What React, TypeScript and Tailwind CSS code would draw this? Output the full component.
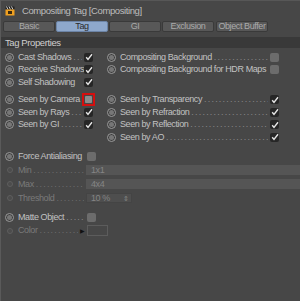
import React from "react";

type Row = { label: string; checked?: boolean; dim?: boolean; dots?: boolean; mark?: boolean };

function Radio({ dim }: { dim?: boolean }) {
  if (dim) {
    return (
      <span className="flex h-[9px] w-[9px] shrink-0 items-center justify-center">
        <span className="block h-[6px] w-[6px] rounded-full border border-[#5e5e5e] bg-[#4c4c4c]" />
      </span>
    );
  }
  return (
    <span className="flex h-[9px] w-[9px] shrink-0 items-center justify-center rounded-full border border-[#9a9a9a] bg-[#3e3e3e]">
      <span className="block h-[5px] w-[5px] rounded-full bg-[#777]" />
    </span>
  );
}

function Check({ checked, mark }: { checked?: boolean; mark?: boolean }) {
  if (checked) {
    return (
      <span className="flex h-[9px] w-[9px] shrink-0 items-center justify-center rounded-[2px] bg-[#262626]">
        <svg width="8" height="8" viewBox="0 0 8 8">
          <path d="M1.2 4.2 L3 6.4 L7 1.2" stroke="#e6e6e6" strokeWidth="1.4" fill="none" />
        </svg>
      </span>
    );
  }
  if (mark) {
    return (
      <span className="-mx-[2px] flex h-[13px] w-[13px] shrink-0 items-center justify-center border-2 border-[#d40f0f]">
        <span className="block h-[7px] w-[7px] rounded-[1px] bg-[#8c8c8c]" />
      </span>
    );
  }
  return <span className="block h-[9px] w-[9px] shrink-0 rounded-[2px] bg-[#6c6c6c]" />;
}

// dotted leader between a label and its control
function Dots({ dim }: { dim?: boolean }) {
  return (
    <span
      className={`mx-[2px] w-0 min-w-0 flex-1 overflow-hidden whitespace-nowrap tracking-[1.2px] ${
        dim ? "text-[#6e6e6e]" : "text-[#8a8a8a]"
      }`}
    >
      ........................................................
    </span>
  );
}

function Label({ row }: { row: Row }) {
  return (
    <>
      <Radio dim={row.dim} />
      <span className={`ml-[4px] whitespace-nowrap ${row.dim ? "text-[#7a7a7a]" : "text-[#c2c2c2]"}`}>
        {row.label}
      </span>
      {row.dots === false ? <span className="flex-1" /> : <Dots dim={row.dim} />}
    </>
  );
}

function Pair({ l, r }: { l?: Row; r?: Row }) {
  return (
    <div className="flex h-[12.5px] items-center">
      <div className="flex w-[102px] shrink-0 items-center pl-[4px] pr-[10px]">
        {l && (
          <>
            <Label row={l} />
            <Check checked={l.checked} mark={l.mark} />
          </>
        )}
      </div>
      <div className="flex min-w-0 flex-1 items-center pl-[4px] pr-[21px]">
        {r && (
          <>
            <Label row={r} />
            <Check checked={r.checked} mark={r.mark} />
          </>
        )}
      </div>
    </div>
  );
}

function FieldRow({ label, children }: { label: string; children: React.ReactNode }) {
  return (
    <div className="flex h-[14px] items-center">
      <div className="flex w-[85px] shrink-0 items-center pl-[4px]">
        <Label row={{ label, dim: true }} />
      </div>
      <div className="min-w-0 flex-1">{children}</div>
    </div>
  );
}

export default function App() {
  return (
    <div
      className="h-[301px] w-[300px] overflow-hidden border-l border-[#5a5a5a] bg-[#474747] text-[9px] leading-none tracking-[-0.4px]"
      style={{ fontFamily: '"Liberation Sans", Arial, sans-serif' }}
    >
      {/* Title */}
      <div className="flex h-[21px] items-center border-t border-[#575757] pl-[4px]">
        <svg width="10" height="10" viewBox="0 0 10 10" className="shrink-0">
          <rect x="0.5" y="0.5" width="9" height="3" fill="#222" />
          <path d="M1.5 0.5 L3 3.5 M4 0.5 L5.5 3.5 M6.5 0.5 L8 3.5" stroke="#ddd" strokeWidth="0.9" />
          <rect x="0.5" y="3.5" width="9" height="6" fill="#f0a020" />
          <rect x="3" y="5" width="4" height="3" fill="#3a2a10" />
        </svg>
        <span className="ml-[7px] text-[9.5px] text-[#bdbdbd]">Compositing Tag [Compositing]</span>
      </div>

      {/* Tabs */}
      <div className="ml-[2px] flex h-[11px] gap-[1px]">
        {["Basic", "Tag", "GI", "Exclusion", "Object Buffer"].map((t, i) => (
          <div
            key={t}
            className={`flex w-[52px] items-center justify-center whitespace-nowrap rounded-[2px] border text-[9px] ${
              i === 1
                ? "border-[#6c84a6] bg-[#8ea8cc] text-[#2a2a2a]"
                : "border-[#3a3a3a] bg-[#585858] text-[#aaaaaa]"
            } ${i === 4 ? "ml-[1px]" : ""}`}
          >
            {t}
          </div>
        ))}
      </div>

      {/* Section header */}
      <div className="mt-[5px] flex h-[11px] items-center bg-[#393939] pl-[4px] text-[9.5px] text-[#cfcfcf]">
        Tag Properties
      </div>

      <div className="mt-[3px]">
        <Pair l={{ label: "Cast Shadows", checked: true }} r={{ label: "Compositing Background" }} />
        <Pair
          l={{ label: "Receive Shadows", checked: true, dots: false }}
          r={{ label: "Compositing Background for HDR Maps", dots: false }}
        />
        <Pair l={{ label: "Self Shadowing", checked: true, dots: false }} />
      </div>

      <div className="mt-[5px]">
        <Pair
          l={{ label: "Seen by Camera", mark: true, dots: false }}
          r={{ label: "Seen by Transparency", checked: true }}
        />
        <Pair l={{ label: "Seen by Rays", checked: true }} r={{ label: "Seen by Refraction", checked: true }} />
        <Pair l={{ label: "Seen by GI", checked: true }} r={{ label: "Seen by Reflection", checked: true }} />
        <Pair r={{ label: "Seen by AO", checked: true }} />
      </div>

      <div className="mt-[7px]">
        <div className="flex h-[12.5px] items-center">
          <div className="flex w-[86px] shrink-0 items-center pl-[4px]">
            <Label row={{ label: "Force Antialiasing", dots: false }} />
          </div>
          <Check />
        </div>
        <FieldRow label="Min">
          <div className="flex h-[10px] items-center bg-[#555555] pl-[5px] text-[#858585]">1x1</div>
        </FieldRow>
        <FieldRow label="Max">
          <div className="flex h-[10px] items-center bg-[#555555] pl-[5px] text-[#858585]">4x4</div>
        </FieldRow>
        <FieldRow label="Threshold">
          <div className="flex h-[10px] w-[46px] items-center justify-between border border-[#444] bg-[#4e4e4e] pl-[4px] pr-[2px] text-[#858585]">
            <span>10 %</span>
            <span className="text-[7px]">⇕</span>
          </div>
        </FieldRow>
      </div>

      <div className="mt-[6px]">
        <div className="flex h-[12.5px] items-center">
          <div className="flex w-[86px] shrink-0 items-center pl-[4px]">
            <Label row={{ label: "Matte Object" }} />
          </div>
          <Check />
        </div>
        <div className="flex h-[14px] items-center">
          <div className="flex w-[79px] shrink-0 items-center pl-[4px]">
            <Label row={{ label: "Color", dim: true }} />
          </div>
          <span className="text-[6px] text-[#111]">▶</span>
          <span className="ml-[2px] block h-[11px] w-[21px] border border-[#5c5c5c] bg-[#474747]" />
        </div>
      </div>
    </div>
  );
}
